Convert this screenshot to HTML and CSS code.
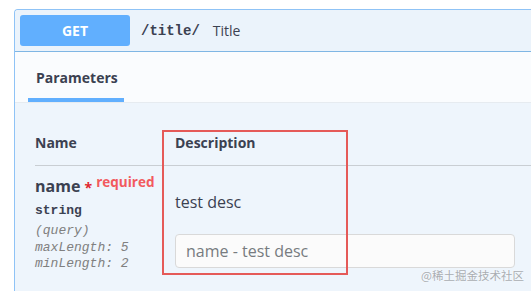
FILE: index.html
```html
<!DOCTYPE html>
<html>
<head>
<meta charset="utf-8">
<link rel="stylesheet" href="styles.css">
</head>
<body>
<div class="opblock">
  <div class="summary">
    <span class="method">GET</span>
    <span class="path">/title/</span>
    <span class="desc">Title</span>
  </div>
  <div class="tabs">
    <div class="tab">Parameters</div>
  </div>
  <div class="params">
    <div class="row head">
      <div class="col-name">Name</div>
      <div class="col-desc">Description</div>
    </div>
    <div class="row body">
      <div class="col-name">
        <div class="pname">name <span class="star">*</span><span class="req">required</span></div>
        <div class="ptype">string</div>
        <div class="pmeta">(query)</div>
        <div class="pmeta">maxLength: 5</div>
        <div class="pmeta">minLength: 2</div>
      </div>
      <div class="col-desc">
        <div class="pdesc">test desc</div>
        <input class="pinput" type="text" placeholder="name - test desc">
      </div>
    </div>
  </div>
</div>
<div class="highlight"></div>
<div class="watermark">@稀土掘金技术社区</div>
</body>
</html>
```

FILE: styles.css
```css
html, body {
  margin: 0;
  padding: 0;
  background: #ffffff;
  font-family: "Open Sans", "Noto Sans", sans-serif;
  color: #3b4151;
}
body {
  width: 531px;
  height: 292px;
  overflow: hidden;
  position: relative;
}
.opblock {
  margin: 9px 0 0 14px;
  border: 1px solid #8fc3f6;
  border-right: none;
  border-bottom: none;
  border-radius: 4px 0 0 0;
  background: #eef5fc;
  height: 282px;
  box-sizing: border-box;
  overflow: hidden;
}
.summary {
  display: flex;
  align-items: center;
  padding: 5px;
  background: #ebf3fb;
  border-bottom: 1px solid #7fb6e4;
}
.method {
  width: 110px;
  height: 31px;
  background: #61affe;
  border-radius: 3px;
  color: #fff;
  font-weight: 700;
  font-size: 14px;
  display: flex;
  align-items: center;
  justify-content: center;
}
.path {
  margin-left: 11px;
  font-family: "Liberation Mono", monospace;
  font-weight: 700;
  font-size: 14px;
  color: #3b4151;
}
.desc {
  margin-left: 13px;
  font-size: 14px;
  color: #3b4151;
}
.tabs {
  background: #fafcfe;
  height: 50px;
  padding-left: 13px;
  display: flex;
  align-items: flex-end;
  border-bottom: 1px solid #e6ebf0;
}
.tab {
  padding: 0 8px;
  font-weight: 700;
  font-size: 14px;
  border-bottom: 4px solid #61affe;
  box-sizing: border-box;
  height: 50px;
  line-height: 52px;
  width: 96px;
}
.params {
  padding: 0 0 0 20px;
}
.row {
  display: flex;
}
.head {
  margin-top: 30px;
  border-bottom: 1px solid #c9ced3;
  font-weight: 700;
  font-size: 14px;
  line-height: 20px;
  padding-bottom: 12px;
}
.col-name {
  width: 140px;
  flex: none;
}
.col-desc {
  flex: 1;
}
.body .col-name {
  padding-top: 10px;
}
.pname {
  font-size: 16px;
  font-weight: 700;
  line-height: 20px;
}
.star {
  color: #e0262f;
  font-size: 14px;
  vertical-align: top;
  position: relative;
  top: 2px;
}
.req {
  color: #f25a5e;
  font-size: 13.5px;
  font-weight: 700;
  vertical-align: top;
  margin-left: 4px;
  position: relative;
  top: -4px;
}
.ptype {
  margin-top: 7px;
  font-family: "Liberation Mono", monospace;
  font-weight: 700;
  font-size: 13px;
  line-height: 16px;
  color: #3b4151;
}
.pmeta {
  font-family: "Liberation Mono", monospace;
  font-style: italic;
  font-size: 13px;
  line-height: 16.5px;
  color: #808080;
}
.ptype + .pmeta {
  margin-top: 4px;
}
.pdesc {
  margin-top: 26px;
  font-size: 16px;
  line-height: 20px;
}
.pinput {
  display: block;
  margin-top: 22px;
  width: 340px;
  height: 34px;
  box-sizing: border-box;
  border: 1px solid #d9d9d9;
  border-radius: 4px;
  background: #fbfbfb;
  padding: 0 10px;
  font-family: "Open Sans", "Noto Sans", sans-serif;
  font-size: 16px;
  color: #3b4151;
  outline: none;
}
.pinput::placeholder {
  color: #777b80;
}
.highlight {
  position: absolute;
  left: 162px;
  top: 130px;
  width: 182px;
  height: 141px;
  border: 2px solid #e55a58;
}
.watermark {
  position: absolute;
  left: 421px;
  top: 267px;
  font-family: "Noto Sans CJK SC", sans-serif;
  font-size: 11.5px;
  color: #a9adb2;
  text-shadow: 0 0 2px #ffffff;
  white-space: nowrap;
}
```
